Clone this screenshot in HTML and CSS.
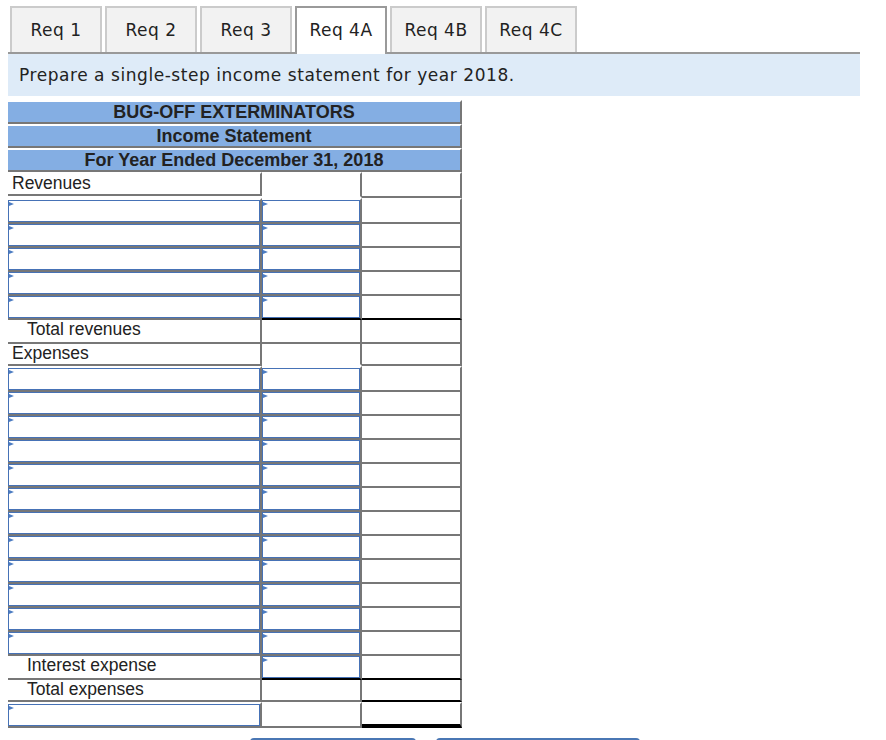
FILE: index.html
```html
<!DOCTYPE html>
<html lang="en">
<head>
    <meta charset="UTF-8">
    <meta name="viewport" content="width=device-width, initial-scale=1.0">
    <title>Req 4A - Income Statement</title>
    <link rel="stylesheet" href="styles.css">
</head>
<body>
    <div class="page">
        <div class="tabs">
            <a href="#" class="tab">Req 1</a>
            <a href="#" class="tab">Req 2</a>
            <a href="#" class="tab">Req 3</a>
            <a href="#" class="tab active">Req 4A</a>
            <a href="#" class="tab">Req 4B</a>
            <a href="#" class="tab">Req 4C</a>
        </div>
        <div class="prompt">Prepare a single-step income statement for year 2018.</div>

        <div class="stmt">
            <div class="hd">BUG-OFF EXTERMINATORS</div>
            <div class="hd">Income Statement</div>
            <div class="hd">For Year Ended December 31, 2018</div>

            <!-- Revenues -->
            <div class="c lbl gap">Revenues</div>
            <div class="c gap open"></div>
            <div class="c gap"></div>

            <div class="c in gap"><div class="box"></div></div>
            <div class="c in gap"><div class="box"></div></div>
            <div class="c gap"></div>
            <div class="c in"><div class="box"></div></div>
            <div class="c in"><div class="box"></div></div>
            <div class="c"></div>
            <div class="c in"><div class="box"></div></div>
            <div class="c in"><div class="box"></div></div>
            <div class="c"></div>
            <div class="c in"><div class="box"></div></div>
            <div class="c in"><div class="box"></div></div>
            <div class="c"></div>
            <div class="c in"><div class="box"></div></div>
            <div class="c in sum"><div class="box"></div></div>
            <div class="c sum"></div>

            <div class="c lbl indent">Total revenues</div>
            <div class="c"></div>
            <div class="c"></div>

            <!-- Expenses -->
            <div class="c lbl short">Expenses</div>
            <div class="c short open"></div>
            <div class="c short"></div>

            <div class="c in gap"><div class="box"></div></div>
            <div class="c in gap"><div class="box"></div></div>
            <div class="c gap"></div>
            <div class="c in"><div class="box"></div></div>
            <div class="c in"><div class="box"></div></div>
            <div class="c"></div>
            <div class="c in"><div class="box"></div></div>
            <div class="c in"><div class="box"></div></div>
            <div class="c"></div>
            <div class="c in"><div class="box"></div></div>
            <div class="c in"><div class="box"></div></div>
            <div class="c"></div>
            <div class="c in"><div class="box"></div></div>
            <div class="c in"><div class="box"></div></div>
            <div class="c"></div>
            <div class="c in"><div class="box"></div></div>
            <div class="c in"><div class="box"></div></div>
            <div class="c"></div>
            <div class="c in"><div class="box"></div></div>
            <div class="c in"><div class="box"></div></div>
            <div class="c"></div>
            <div class="c in"><div class="box"></div></div>
            <div class="c in"><div class="box"></div></div>
            <div class="c"></div>
            <div class="c in"><div class="box"></div></div>
            <div class="c in"><div class="box"></div></div>
            <div class="c"></div>
            <div class="c in"><div class="box"></div></div>
            <div class="c in"><div class="box"></div></div>
            <div class="c"></div>
            <div class="c in"><div class="box"></div></div>
            <div class="c in"><div class="box"></div></div>
            <div class="c"></div>
            <div class="c in"><div class="box"></div></div>
            <div class="c in"><div class="box"></div></div>
            <div class="c"></div>

            <div class="c lbl indent">Interest expense</div>
            <div class="c in sum"><div class="box"></div></div>
            <div class="c sum"></div>

            <div class="c lbl indent short">Total expenses</div>
            <div class="c short"></div>
            <div class="c short sum"></div>

            <div class="c in gap"><div class="box"></div></div>
            <div class="c gap"></div>
            <div class="c gap total"></div>
        </div>
    </div>

    <div class="actions">
        <button class="nav-btn prev" aria-label="Previous: Req 3"></button>
        <button class="nav-btn next" aria-label="Next: Req 4B"></button>
    </div>
</body>
</html>
```

FILE: styles.css
```css
body {
    margin: 0;
    padding: 0;
    background: #fff;
    color: #222;
}
.page {
    padding: 6px 26px 0 8px;
}
.tabs {
    display: flex;
    align-items: flex-start;
    gap: 3px;
    padding-left: 2px;
    height: 46px;
    border-bottom: 2px solid #999;
}
.tab {
    box-sizing: border-box;
    width: 92px;
    height: 46px;
    display: flex;
    align-items: center;
    justify-content: center;
    background-color: #f2f2f2;
    border: 2px solid #cbcbcb;
    border-bottom: none;
    color: #222;
    text-decoration: none;
    font-family: "DejaVu Sans", Verdana, sans-serif;
    font-size: 17px;
    letter-spacing: 0.5px;
}
.tab.active {
    height: 48px;
    margin-bottom: -2px;
    padding-bottom: 2px;
    background-color: #fff;
    border-color: #9a9a9a;
    position: relative;
}
.prompt {
    height: 42px;
    display: flex;
    align-items: center;
    padding-left: 11px;
    background-color: #deebf8;
    font-family: "DejaVu Sans", Verdana, sans-serif;
    font-size: 17px;
    letter-spacing: 0.55px;
}
.stmt {
    margin-top: 4px;
    width: 454px;
    display: grid;
    grid-template-columns: 254px 100px 100px;
    font-family: "Liberation Sans", Arial, sans-serif;
    font-size: 17.5px;
    color: #222;
}
.hd {
    grid-column: 1 / -1;
    box-sizing: border-box;
    height: 24px;
    line-height: 20px;
    text-align: center;
    font-weight: bold;
    font-size: 18px;
    background-color: #84aee3;
    border-top: 2px solid #fff;
    border-right: 2px solid #777;
    border-bottom: 2px solid #777;
}
.c {
    box-sizing: border-box;
    height: 24px;
    border-right: 2px solid #777;
    border-bottom: 2px solid #777;
}
.c.gap {
    height: 26px;
    border-top: 2px solid #fff;
}
.c.lbl.gap {
    height: 24px;
}
.c.short {
    height: 22px;
}
.c.open {
    border-bottom-color: #fff;
}
.c.sum {
    border-bottom-color: #000;
}
.c.total {
    border-bottom: 4px solid #000;
}
.lbl {
    padding-left: 4px;
    line-height: 19px;
    white-space: nowrap;
}
.lbl.indent {
    padding-left: 19px;
}
.box {
    position: relative;
    box-sizing: border-box;
    height: 22px;
    border: 1px solid #4672b6;
}
.box::before {
    content: "";
    position: absolute;
    top: 1px;
    left: 0;
    border-top: 2.5px solid transparent;
    border-bottom: 2.5px solid transparent;
    border-left: 5px solid #4c7cc2;
}
.actions {
    display: flex;
    justify-content: center;
    gap: 20px;
    margin-top: 10px;
    padding-left: 4px;
}
.nav-btn {
    height: 36px;
    border: none;
    border-radius: 4px 4px 0 0;
    background-color: #4a77b4;
    cursor: pointer;
}
.nav-btn.prev {
    width: 166px;
}
.nav-btn.next {
    width: 204px;
}
```
